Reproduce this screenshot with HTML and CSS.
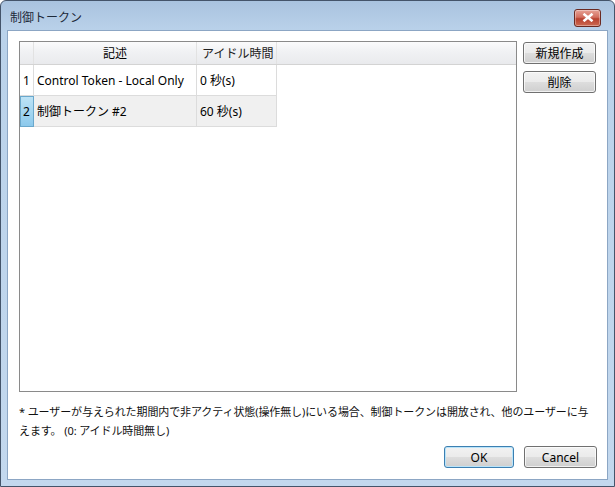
FILE: index.html
```html
<!DOCTYPE html>
<html lang="ja">
<head>
    <meta charset="UTF-8">
    <title>制御トークン</title>
    <link rel="stylesheet" href="styles.css">
</head>
<body>
    <div class="window">
        <div class="titlebar">
            <span class="title">制御トークン</span>
            <button class="close-btn">
                <svg width="12" height="9" viewBox="0 0 12 9">
                    <path d="M1.5 0.8 L10.5 8.2 M10.5 0.8 L1.5 8.2" stroke="#fff" stroke-width="2.6" fill="none"/>
                </svg>
            </button>
        </div>

        <div class="client">
            <div class="main">
                <div class="grid">
                    <div class="grid-row header">
                        <div class="cell rowhead"></div>
                        <div class="cell desc center">記述</div>
                        <div class="cell idle">アイドル時間</div>
                    </div>
                    <div class="grid-row">
                        <div class="cell rowhead">1</div>
                        <div class="cell desc">Control Token - Local Only</div>
                        <div class="cell idle">0 秒(s)</div>
                    </div>
                    <div class="grid-row selected">
                        <div class="cell rowhead">2</div>
                        <div class="cell desc">制御トークン #2</div>
                        <div class="cell idle">60 秒(s)</div>
                    </div>
                </div>
                <div class="side-buttons">
                    <button class="btn">新規作成</button>
                    <button class="btn">削除</button>
                </div>
            </div>

            <p class="note">* ユーザーが与えられた期間内で非アクティ状態(操作無し)にいる場合、制御トークンは開放され、他のユーザーに与えます。 (0: アイドル時間無し)</p>

            <div class="footer">
                <button class="btn btn-default">OK</button>
                <button class="btn">Cancel</button>
            </div>
        </div>
    </div>
</body>
</html>
```

FILE: styles.css
```css
* {
    margin: 0;
    padding: 0;
    box-sizing: border-box;
}

body {
    font-family: "Noto Sans", "Noto Sans CJK JP", sans-serif;
    font-size: 12px;
    color: #000;
    background: #fff;
}

.window {
    width: 615px;
    height: 487px;
    border: 1px solid #44546a;
    border-radius: 6px 6px 0 0;
    background: linear-gradient(180deg, #a9c3df 0%, #bad2ea 30px, #c3d8ee 100%);
    display: flex;
    flex-direction: column;
}

.titlebar {
    height: 29px;
    display: flex;
    align-items: center;
    justify-content: space-between;
    padding: 0 13px 0 9px;
}

.title {
    font-size: 12px;
    color: #1e2a3a;
    margin-top: 3px;
}

.close-btn {
    width: 27px;
    height: 18px;
    margin-top: 4px;
    border: 1px solid #6b2a22;
    border-radius: 3px;
    background: linear-gradient(180deg, #e7a296 0%, #d36f5f 45%, #b8412f 55%, #cd6a52 100%);
    display: flex;
    align-items: center;
    justify-content: center;
    box-shadow: inset 0 0 0 1px rgba(255,255,255,0.35);
}

.client {
    flex: 1;
    margin: 0 6px 6px 6px;
    background: #fff;
    border: 1px solid #8ca6c4;
    padding: 10px 8px 11px 11px;
    display: flex;
    flex-direction: column;
}

.main {
    flex: 1;
    display: flex;
    gap: 6px;
}

.grid {
    width: 498px;
    border: 1px solid #8a8a8a;
    background: #fff;
}

.grid-row {
    display: flex;
    height: 31px;
}

.grid-row.header {
    height: 23px;
    background: linear-gradient(180deg, #fbfbfc 0%, #f1f2f4 40%, #e9eaed 100%);
    border-bottom: 1px solid #d3d3d3;
}

.cell {
    display: flex;
    align-items: center;
    padding-left: 3px;
    border-right: 1px solid #dcdcdc;
    border-bottom: 1px solid #dcdcdc;
    white-space: nowrap;
}

.header .cell {
    border-bottom: none;
    border-right: 1px solid #e2e2e2;
}

.header .idle {
    padding-left: 5px;
    color: #222;
}

.cell.center {
    justify-content: center;
    padding-left: 0;
}

.rowhead {
    width: 14px;
    padding-left: 3px;
    background: #fff;
}

.header .rowhead {
    background: transparent;
}

.desc {
    width: 163px;
}

.idle {
    width: 80px;
}

.grid-row.selected .cell {
    background: #f0f0f0;
}

.grid-row.selected .rowhead {
    background: linear-gradient(180deg, #bde3f6 0%, #8cc9ec 100%);
    border: 1px solid #6aa8cc;
    padding-left: 2px;
}

.side-buttons {
    display: flex;
    flex-direction: column;
    gap: 7px;
    padding-top: 1px;
}

.btn {
    width: 73px;
    height: 22px;
    font-family: inherit;
    font-size: 12px;
    color: #000;
    border: 1px solid #707070;
    border-radius: 3px;
    background: linear-gradient(180deg, #f2f2f2 0%, #ebebeb 48%, #dddddd 52%, #cfcfcf 100%);
    box-shadow: inset 0 0 0 1px rgba(255,255,255,0.7);
}

.btn-default {
    width: 70px;
    border-color: #3c7fb1;
    box-shadow: inset 0 0 0 1px #b9e4fa;
}

.note {
    margin-top: 10px;
    font-size: 11px;
    line-height: 19px;
    letter-spacing: -0.1px;
    color: #111;
}

.footer {
    display: flex;
    justify-content: flex-end;
    gap: 10px;
    margin-top: 6px;
    padding-right: 2px;
}
```
